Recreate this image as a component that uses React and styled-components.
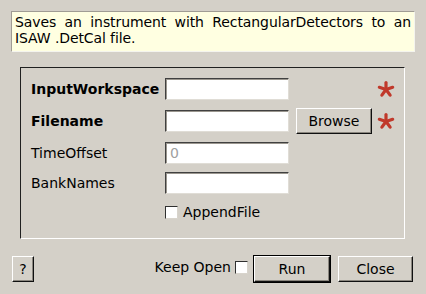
import React from 'react';
import styled, { createGlobalStyle } from 'styled-components';

const Global = createGlobalStyle`
    body {
        margin: 0;
        background: #d4d0c8;
        font-family: "DejaVu Sans", sans-serif;
        font-size: 14px;
        color: #000;
    }
`

const Dialog = styled.div`
    width: 426px;
    height: 294px;
    box-sizing: border-box;
    padding: 11px 11px 0 11px;
    display: flex;
    flex-direction: column;
`

const Tip = styled.div`
    width: 404px;
    height: 41px;
    box-sizing: border-box;
    background: #ffffe1;
    border: 1px solid;
    border-color: #a09c94 #f4f4ee #f4f4ee #a09c94;
    padding: 2px 3px 0 3px;
    line-height: 16px;
    text-align: justify;
    text-align-last: left;
    letter-spacing: -0.1px;
`

const Frame = styled.div`
    margin: 15px 10px 0 9px;
    height: 172px;
    box-sizing: border-box;
    border: 1px solid;
    border-color: #202020 #fff #fff #202020;
    padding: 10px 0 0 10px;
    display: grid;
    grid-template-columns: 128px 124px 76px 24px;
    grid-template-rows: 22px 26px 22px 22px 20px;
    column-gap: 6px;
    row-gap: 8px;
    align-items: center;
`

const Label = styled.div`
    grid-column: 1;
    font-weight: ${p => (p.$required ? 'bold' : 'normal')};
    white-space: nowrap;
`

const Input = styled.div`
    grid-column: 2;
    height: 22px;
    box-sizing: border-box;
    background: #fff;
    border: 1px solid;
    border-color: #404040 #e0ddd6 #e0ddd6 #404040;
    box-shadow: inset 1px 1px 0 #9a968e;
    color: #a0a0a0;
    padding: 2px 4px;
    line-height: 16px;
`

const Button = styled.div`
    height: ${p => p.$h || 26}px;
    width: ${p => p.$w}px;
    margin-left: ${p => p.$ml || 0}px;
    box-sizing: border-box;
    display: flex;
    align-items: center;
    justify-content: center;
    background: #d4d0c8;
    border: 1px solid;
    border-color: #fff #101010 #101010 #fff;
    box-shadow: inset -1px -1px 0 #8a867e;
    ${p => p.$default && `
        outline: 1px solid #000;
    `}
`

const Star = styled.svg`
    grid-column: 4;
    justify-self: start;
`

const CheckRow = styled.div`
    grid-column: 2 / span 3;
    display: flex;
    align-items: center;
    gap: 5px;
`

const Box = styled.div`
    width: 13px;
    height: 13px;
    box-sizing: border-box;
    background: #fff;
    border: 1px solid;
    border-color: #303030 #d8d4cc #d8d4cc #303030;
`

const Footer = styled.div`
    margin-top: 17px;
    display: flex;
    align-items: center;
    padding-left: 1px;
    padding-right: 2px;
`

const Spacer = styled.div`
    flex: 1;
`

const Keep = styled.div`
    display: flex;
    align-items: center;
    gap: 4px;
    margin-right: 6px;
    padding-bottom: 4px;
`

const Asterisk = () => (
    <Star width="18" height="18" viewBox="0 0 18 18">
        {[0, 72, 144, 216, 288].map(a => (
            <line key={a} x1="9" y1="9.5" x2="9" y2="2.5" stroke="#c0392b" strokeWidth="3.2"
                strokeLinecap="round" transform={`rotate(${a} 9 9.5)`} />
        ))}
    </Star>
)

const App = () => {
    return (
        <Dialog>
            <Global />
            <Tip>Saves an instrument with RectangularDetectors to an ISAW .DetCal file.</Tip>
            <Frame>
                <Label $required>InputWorkspace</Label>
                <Input />
                <div />
                <Asterisk />

                <Label $required>Filename</Label>
                <Input />
                <Button $w={76} $ml={1}>Browse</Button>
                <Asterisk />

                <Label>TimeOffset</Label>
                <Input>0</Input>
                <div />
                <div />

                <Label>BankNames</Label>
                <Input />
                <div />
                <div />

                <div />
                <CheckRow><Box />AppendFile</CheckRow>
            </Frame>
            <Footer>
                <Button $w={22}>?</Button>
                <Spacer />
                <Keep>Keep Open <Box /></Keep>
                <Button $w={76} $default style={{ marginRight: 8 }}>Run</Button>
                <Button $w={75}>Close</Button>
            </Footer>
        </Dialog>
    );
};

export default App;
